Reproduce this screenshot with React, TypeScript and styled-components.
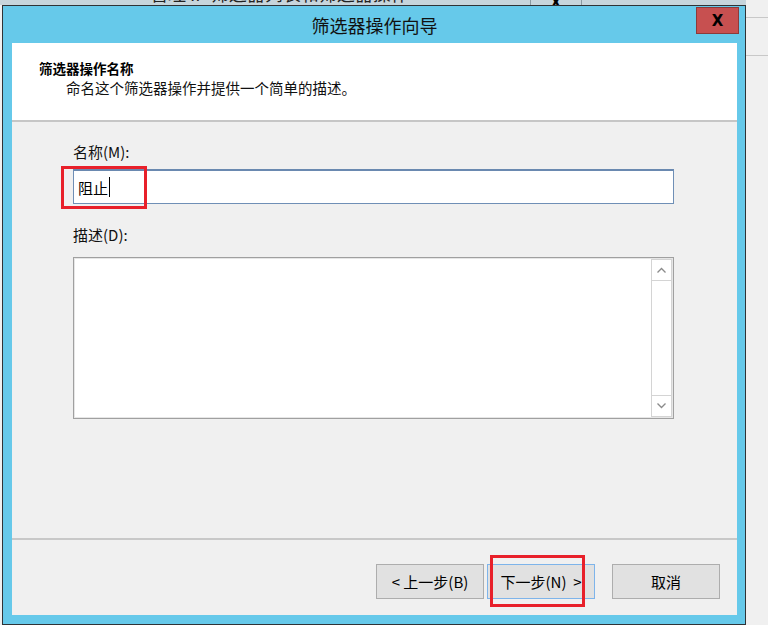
import React from "react";
import styled, { createGlobalStyle } from "styled-components";

const Global = createGlobalStyle`
  html, body { margin: 0; padding: 0; }
  body {
    width: 768px; height: 626px; overflow: hidden;
    font-family: "Noto Sans CJK SC", "Noto Sans", sans-serif;
    background: #f0f0f0;
  }
`;

const Desktop = styled.div`
  position: relative;
  width: 768px;
  height: 626px;
  overflow: hidden;
  background: #f0f0f0;
`;

const BackTitle = styled.div`
  position: absolute;
  left: 0;
  top: 0;
  width: 746px;
  height: 5px;
  background: #c7d5dc;
  overflow: hidden;
`;

const BackTitleText = styled.div`
  position: absolute;
  left: 150px;
  top: -19px;
  font-size: 18px;
  line-height: 24px;
  color: #222;
  white-space: nowrap;
`;

const BackClose = styled.div`
  position: absolute;
  left: 530px;
  top: -20px;
  width: 50px;
  height: 24px;
  border: 1px solid #8a9aa2;
  font-weight: 700;
  font-size: 18px;
  text-align: center;
  line-height: 40px;
`;

const BackRightLine = styled.div<{ $top: number }>`
  position: absolute;
  left: 746px;
  right: 0;
  top: ${(p) => p.$top}px;
  height: 1px;
  background: #c8c8c8;
`;

const BottomStrip = styled.div`
  position: absolute;
  left: 0;
  right: 0;
  top: 625px;
  height: 1px;
  background: #ffffff;
`;

const Dialog = styled.div`
  position: absolute;
  left: 2px;
  top: 5px;
  width: 744px;
  height: 620px;
  box-sizing: border-box;
  border: 1px solid #2f3336;
  background: #66c9ea;
  display: flex;
  flex-direction: column;
  padding: 0 8px 9px 9px;
`;

const TitleBar = styled.div`
  height: 37px;
  display: flex;
  align-items: center;
  justify-content: center;
  font-size: 18px;
  color: #111;
  padding-top: 1px;
  box-sizing: border-box;
`;

const CloseButton = styled.div`
  position: absolute;
  top: 1px;
  right: 6px;
  width: 43px;
  height: 27px;
  box-sizing: border-box;
  background: #c75050;
  border: 1px solid #8c3a3a;
  display: flex;
  align-items: center;
  justify-content: center;
  font-family: "DejaVu Sans", sans-serif;
  font-weight: 700;
  font-size: 15px;
  color: #000;
`;

const Client = styled.div`
  flex: 1;
  background: #f0f0f0;
  display: flex;
  flex-direction: column;
`;

const Header = styled.div`
  height: 79px;
  box-sizing: border-box;
  background: #ffffff;
  border-bottom: 2px solid #c6c6c6;
  padding: 15px 0 0 27px;
`;

const HeaderTitle = styled.div`
  font-size: 13.5px;
  line-height: 20px;
  font-weight: 700;
  color: #000;
`;

const HeaderSub = styled.div`
  font-size: 14.5px;
  line-height: 20px;
  color: #111;
  padding-left: 27px;
`;

const Body = styled.div`
  flex: 1;
  padding: 20px 0 0 61px;
  display: flex;
  flex-direction: column;
`;

const Label = styled.div<{ $gap: number; $top?: number }>`
  font-size: 15px;
  line-height: 20px;
  color: #111;
  margin-top: ${(p) => p.$top ?? 0}px;
  margin-bottom: ${(p) => p.$gap}px;
`;

const FieldWrap = styled.div`
  position: relative;
  width: 601px;
`;

const TextBox = styled.div`
  height: 35px;
  box-sizing: border-box;
  background: #fff;
  border: 1px solid #6f8fb6;
  border-top: 2px solid #6a89b0;
  display: flex;
  align-items: center;
  padding-left: 4px;
  font-size: 15px;
  color: #000;
`;

const Caret = styled.span`
  display: inline-block;
  width: 1px;
  height: 20px;
  background: #000;
  margin-left: 1px;
`;

const Highlight = styled.div<{ $l: number; $t: number; $w: number; $h: number }>`
  position: absolute;
  left: ${(p) => p.$l}px;
  top: ${(p) => p.$t}px;
  width: ${(p) => p.$w}px;
  height: ${(p) => p.$h}px;
  box-sizing: border-box;
  border: 3px solid #e8202a;
  pointer-events: none;
`;

const TextArea = styled.div`
  width: 601px;
  height: 162px;
  box-sizing: border-box;
  background: #fff;
  border: 1px solid #a0a0a0;
  box-shadow: inset 0 0 0 1px #e6e6e6;
  display: flex;
  justify-content: flex-end;
  padding: 1px 1px 1px 0;
`;

const ScrollBar = styled.div`
  width: 21px;
  display: flex;
  flex-direction: column;
  border: 1px solid #d4d4d4;
  box-sizing: border-box;
  background: #fff;
`;

const ScrollBtn = styled.div`
  height: 21px;
  box-sizing: border-box;
  display: flex;
  align-items: center;
  justify-content: center;
  border-bottom: 1px solid #d4d4d4;
  &:last-child {
    border-bottom: none;
    border-top: 1px solid #d4d4d4;
  }
`;

const ScrollTrack = styled.div`
  flex: 1;
`;

const Footer = styled.div`
  border-top: 2px solid #c8c8c8;
  padding: 24px 17px 16px 0;
  display: flex;
  justify-content: flex-end;
  align-items: center;
`;

const ButtonWrap = styled.div<{ $gap: number }>`
  position: relative;
  margin-left: ${(p) => p.$gap}px;
`;

const Button = styled.div<{ $focus?: boolean }>`
  width: 108px;
  height: 35px;
  box-sizing: border-box;
  background: #e1e1e1;
  border: 1px solid ${(p) => (p.$focus ? "#7eb4ea" : "#adadad")};
  display: flex;
  align-items: center;
  justify-content: center;
  font-size: 15px;
  color: #000;
  white-space: pre;
`;

const Chevron = ({ up }: { up?: boolean }) => (
  <svg width="9" height="6" viewBox="0 0 9 6">
    <path
      d={up ? "M0.5 5.5 L4.5 1.5 L8.5 5.5" : "M0.5 0.5 L4.5 4.5 L8.5 0.5"}
      fill="none"
      stroke="#8a8a8a"
      strokeWidth="1.3"
    />
  </svg>
);

export default function App() {
  return (
    <>
      <Global />
      <Desktop>
        <BackTitle>
          <BackTitleText>管理 IP 筛选器列表和筛选器操作</BackTitleText>
          <BackClose>X</BackClose>
        </BackTitle>
        <BackRightLine $top={17} />
        <BackRightLine $top={55} />
        <BottomStrip />
        <Dialog>
          <TitleBar>筛选器操作向导</TitleBar>
          <CloseButton>X</CloseButton>
          <Client>
            <Header>
              <HeaderTitle>筛选器操作名称</HeaderTitle>
              <HeaderSub>命名这个筛选器操作并提供一个简单的描述。</HeaderSub>
            </Header>
            <Body>
              <Label $gap={7}>名称(M):</Label>
              <FieldWrap>
                <TextBox>
                  阻止
                  <Caret />
                </TextBox>
                <Highlight $l={-12} $t={-3} $w={86} $h={43} />
              </FieldWrap>
              <Label $gap={12} $top={21}>
                描述(D):
              </Label>
              <TextArea>
                <ScrollBar>
                  <ScrollBtn>
                    <Chevron up />
                  </ScrollBtn>
                  <ScrollTrack />
                  <ScrollBtn>
                    <Chevron />
                  </ScrollBtn>
                </ScrollBar>
              </TextArea>
            </Body>
            <Footer>
              <ButtonWrap $gap={0}>
                <Button>{"< 上一步(B)"}</Button>
              </ButtonWrap>
              <ButtonWrap $gap={3}>
                <Button $focus>{"下一步(N)  >"}</Button>
                <Highlight $l={3} $t={-9} $w={95} $h={52} />
              </ButtonWrap>
              <ButtonWrap $gap={17}>
                <Button>取消</Button>
              </ButtonWrap>
            </Footer>
          </Client>
        </Dialog>
      </Desktop>
    </>
  );
}
